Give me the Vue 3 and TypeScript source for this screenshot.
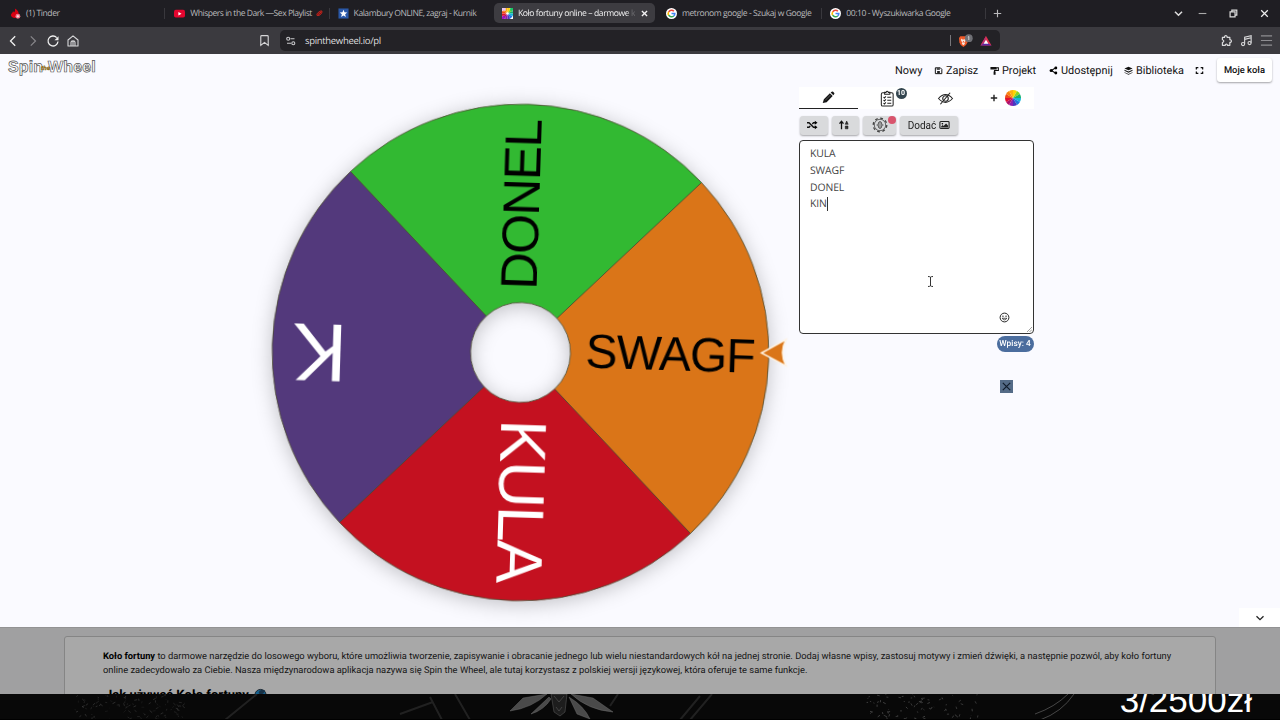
<script setup lang="ts">
interface Tab { title: string; icon: string; active?: boolean; cls: string }
interface Slice { label: string; color: string; ink: string; angle: number; size: number; end: number; len?: number }

const tabs: Tab[] = [
  { title: '(1) Tinder', icon: 'tinder', cls: 't1' },
  { title: 'Whispers in the Dark —Sex Playlist', icon: 'yt', cls: 't2' },
  { title: 'Kalambury ONLINE, zagraj - Kurnik', icon: 'kurnik', cls: 't3' },
  { title: 'Koło fortuny online – darmowe k', icon: 'wheel', active: true, cls: 't4' },
  { title: 'metronom google - Szukaj w Google', icon: 'google', cls: 't5' },
  { title: '00:10 - Wyszukiwarka Google', icon: 'google', cls: 't6' },
]

const slices: Slice[] = [
  { label: 'SWAGF', color: '#da7518', ink: '#000', angle: 0, size: 48, end: 235, len: 170 },
  { label: 'KULA', color: '#c41120', ink: '#fff', angle: 90, size: 65, end: 231, len: 164 },
  { label: 'K', color: '#53397c', ink: '#fff', angle: 180, size: 82, end: 228 },
  { label: 'DONEL', color: '#32b932', ink: '#000', angle: 270, size: 51.5, end: 234, len: 171 },
]
const R = 248.3
const r = 50
const c = Math.SQRT1_2
const wedge = `M${r * c} ${-r * c}L${R * c} ${-R * c}A${R} ${R} 0 0 1 ${R * c} ${R * c}L${r * c} ${r * c}A${r} ${r} 0 0 0 ${r * c} ${-r * c}Z`

const hues = ['#ffd400', '#8bd420', '#17b36b', '#14b7d8', '#1e78e0', '#4838c0', '#8a1fb0', '#b0106a', '#e01030', '#f04a18', '#f88410', '#fcb010']
const p = (a: number, d: number) => `${(Math.sin(a) * d).toFixed(2)} ${(-Math.cos(a) * d).toFixed(2)}`
const hueWedge = (i: number) => `M0 0L${p((i * Math.PI) / 6, 8)}A8 8 0 0 1 ${p(((i + 1) * Math.PI) / 6, 8)}Z`

const entries = ['KULA', 'SWAGF', 'DONEL', 'KIN']
const rnd = (n: number) => { const v = Math.sin(n * 12.9898) * 43758.5453; return v - Math.floor(v) }
const speckles = Array.from({ length: 190 }, (_, i) => {
  const x = (i % 5 < 3 ? 76 : 868) + rnd(i) * 110
  const y = rnd(i + 500) * 26
  return { d: `M${x.toFixed(1)} ${y.toFixed(1)}l${(rnd(i + 900) * 6 - 3).toFixed(1)} ${(rnd(i + 1300) * 5 - 2.5).toFixed(1)}`, o: 0.08 + (i % 5) * 0.05 }
})
</script>

<template>
  <div class="screen">
    <header class="tabbar">
      <div v-for="t in tabs" :key="t.title" class="tab" :class="[t.cls, { active: t.active }]">
        <svg v-if="t.icon === 'tinder'" class="fav" viewBox="0 0 12 12"><path d="M1 8C1 5.500 3 5.500 3.400 3.500C4 4 4.300 4.500 4.400 5C5.500 4 5.800 2.300 5.300.5C8.500 2 10 4.500 9.500 8C8.500 11.500 2 12 1 8Z" fill="#d80012" /><circle cx="8.600" cy="9" r="2.700" fill="#ef7187" /><path d="M8.600 7.600V10.400M7.200 9H10" stroke="#fff" stroke-width=".8" /></svg>
        <svg v-else-if="t.icon === 'yt'" class="fav" viewBox="0 0 12 12"><rect y="2" width="12" height="8.400" rx="2" fill="#e4062f" /><path d="M4.800 4.300L8.200 6.200L4.800 8.100Z" fill="#fff" /></svg>
        <svg v-else-if="t.icon === 'kurnik'" class="fav" viewBox="0 0 12 12"><rect x=".5" y=".5" width="11" height="11" fill="#2a58a8" /><path d="M6 1.900L7.100 4.700L10.100 4.900L7.800 6.800L8.600 9.800L6 8.200L3.400 9.800L4.200 6.800L1.900 4.900L4.900 4.700Z" fill="#fff" /></svg>
        <svg v-else-if="t.icon === 'wheel'" class="fav" viewBox="0 0 12 12"><rect width="12" height="12" fill="#fff" /><g transform="translate(6 6) scale(.78)"><path v-for="(h, i) in hues" :key="h" :d="hueWedge(i)" :fill="h" /></g><path d="M0 0h4v3H0z" fill="#e9c7f2" /><path d="M9 0h3v3H9z" fill="#16c768" /><path d="M0 9h3v3H0z" fill="#a015c8" /><circle cx="6" cy="6" r="1.400" fill="#fff" /></svg>
        <svg v-else class="fav" viewBox="0 0 12 12"><circle cx="6" cy="6" r="6" fill="#fff" /><g fill="none" stroke-width="1.700"><path d="M2.900 4.200A3.600 3.600 0 0 1 8.600 3.500" stroke="#ea4335" /><path d="M2.900 7.800A3.600 3.600 0 0 1 2.900 4.200" stroke="#fbbc05" /><path d="M8.400 8.700A3.600 3.600 0 0 1 2.900 7.800" stroke="#34a853" /><path d="M6 6H9.600A3.600 3.600 0 0 1 8.400 8.700" stroke="#4285f4" /></g></svg>
        <span class="title">{{ t.title }}</span>
        <svg v-if="t.icon === 'yt'" class="lips" viewBox="0 0 8 8"><path d="M1 6C.5 4 4 1 6.500 1C8 3 4 7.500 1 6ZM2 5.500L6 2" fill="#6c1013" stroke="#d12a20" stroke-width="1" /></svg>
        <svg v-if="t.active" class="close" viewBox="0 0 8 8"><path d="M1.700 1.700L6.300 6.300M6.300 1.700L1.700 6.300" stroke="#f2f2f2" stroke-width="1.200" /></svg>
      </div>
      <svg class="plus" viewBox="0 0 8 8"><path d="M4 .7V7.300M.7 4H7.300" stroke="#b9b9bc" /></svg>
      <div class="window">
        <svg viewBox="0 0 10 10"><path d="M1.800 3.400L5 6.600L8.200 3.400" fill="none" stroke="#ddd" stroke-width="1.400" /></svg>
        <svg viewBox="0 0 10 10"><path d="M1.500 5H8.500" stroke="#aaa" /></svg>
        <svg viewBox="0 0 10 10"><path d="M1.900 3.500H6.400V8H1.900ZM3.500 3.300V2H8V6.500H6.600" fill="none" stroke="#ddd" stroke-width="1.100" /></svg>
        <svg viewBox="0 0 10 10"><path d="M2 2L8 8M8 2L2 8" stroke="#eee" stroke-width="1.100" /></svg>
      </div>
    </header>

    <nav class="toolbar">
      <div class="navicons">
        <svg viewBox="0 0 14 14"><path d="M9.200 2.300L4.500 7L9.200 11.700" fill="none" stroke="#f0f0f0" stroke-width="1.300" /></svg>
        <svg viewBox="0 0 14 14"><path d="M4.800 2.300L9.500 7L4.800 11.700" fill="none" stroke="#88878b" stroke-width="1.200" /></svg>
        <svg viewBox="0 0 14 14"><path d="M12 7.500A5 5 0 1 1 10.700 3.600" fill="none" stroke="#f0f0f0" stroke-width="1.300" /><path d="M12.500 2.300V6.300H8.500Z" fill="#f0f0f0" /></svg>
        <svg viewBox="0 0 14 14"><path d="M2 6L7 1.800L12 6V12H2ZM5 12V8.200C5 6.400 9 6.400 9 8.200V12M7 7.500V12" fill="none" stroke="#d8d8da" stroke-width="1.100" stroke-linejoin="round" /></svg>
      </div>
      <svg class="bookmark" viewBox="0 0 14 14"><path d="M3 2.600Q3 1.700 4 1.700H10Q11 1.700 11 2.600V12.300L7 9L3 12.300Z" fill="none" stroke="#d6d6d8" stroke-width="1.200" /></svg>
      <div class="address">
        <svg class="tune" viewBox="0 0 12 12"><g fill="none" stroke="#c9c9cc" stroke-width="1.100"><circle cx="3.200" cy="3.800" r="1.500" /><path d="M5.500 3.800H9.500M2 8.200H6" /><circle cx="8.300" cy="8.200" r="1.500" /></g></svg>
        <span class="url">spinthewheel.io/pl</span>
        <i class="bar"></i>
        <svg class="brave" viewBox="0 0 16 14"><path d="M2 4L3.300 2.300H9.200L10.800 4L10.400 8.500Q9.500 11.500 6.400 13Q3.200 11.500 2.400 8.500Z" fill="#ef5a29" /><path d="M4 4.500L5.500 5.500H7.300L9 4.500L8.500 7L7.300 8.500L8 9.800L6.400 11.200L4.800 9.800L5.500 8.500L4.200 7Z" fill="#f5e8e2" /><path d="M5.800 7H7L6.400 9.200Z" fill="#ef5a29" /><circle cx="11.800" cy="4.200" r="3.900" fill="#6f7075" /><path d="M11.800 2.500V6M10.900 3.200L11.800 2.500" fill="none" stroke="#ddd" stroke-width=".9" /></svg>
        <svg class="bat" viewBox="0 0 12 12"><path d="M6 1L11.500 10.500H.5Z" fill="#e5304a" /><path d="M6 1L.5 10.500L6 7.500Z" fill="#b93070" /><path d="M.5 10.500H11.500L6 7Z" fill="#5a28a5" /><path d="M6 4.700L8.400 8.700H3.600Z" fill="#fff" /></svg>
      </div>
      <div class="ext">
        <svg viewBox="0 0 14 14"><path d="M3 3.500H5.300C4.800 1 8.500 1 8.100 3.500H11V6C13.300 5.600 13.300 9.300 11 8.900V12H8.300C8.500 10.300 6 10.300 6.100 12H3V9C5 8.600 5 6.300 3 6Z" transform="translate(-.4 .2)" fill="none" stroke="#dadadc" stroke-width="1.300" stroke-linejoin="round" /></svg>
        <svg viewBox="0 0 14 14"><g fill="none" stroke="#dadadc" stroke-width="1.200"><path d="M5 10.500V3.500L12 1.800V9.500M5 5.800L12 4.100" /><circle cx="3.300" cy="10.800" r="1.700" /><circle cx="10.300" cy="9.800" r="1.700" /></g></svg>
        <svg viewBox="0 0 14 14"><path d="M1 2H13M1 7H13M1 12H13" stroke="#8e8d91" stroke-width="1.200" /></svg>
      </div>
    </nav>

    <main class="page">
      <div class="head">
        <div class="logo"><span>Spin</span><em>the</em><span>Wheel</span></div>
        <ul class="menu">
          <li class="m-new">Nowy</li>
          <li class="m-save"><svg viewBox="0 0 10 10"><path d="M1.500 2H7L8.700 3.700V8.500H1.500Z" fill="none" stroke="#111" stroke-width="1.100" /><path d="M3 2.500H6.500V4.300H3ZM3.500 5.500H6.500V8H3.500Z" fill="#222" /></svg>Zapisz</li>
          <li class="m-proj"><svg viewBox="0 0 10 10"><path d="M.5 1H7.500V4H.5ZM4 6H6.200V9.700H4Z" fill="#111" /><path d="M7.500 2H9.300V5H5V7" fill="none" stroke="#111" stroke-width="1.200" /></svg>Projekt</li>
          <li class="m-share"><svg viewBox="0 0 10 10"><path d="M7.500 2L2.600 5L7.500 8" fill="none" stroke="#111" stroke-width="1.200" /><circle cx="7.600" cy="2.200" r="1.600" /><circle cx="2.400" cy="5" r="1.700" /><circle cx="7.600" cy="7.800" r="1.600" /></svg>Udostępnij</li>
          <li class="m-lib"><svg viewBox="0 0 10 10"><path d="M5 .8L9.500 2.800L5 4.800L.5 2.800ZM.5 4.300L5 6.200L9.500 4.300V5.400L5 7.400L.5 5.400ZM.5 6.900L5 8.800L9.500 6.900V7.600L5 9.800L.5 7.600Z" fill="#111" /></svg>Biblioteka</li>
          <li class="m-full"><svg viewBox="0 0 10 10"><path d="M1.500 4V1.800H3.700M6.300 1.800H8.500V4M8.500 6V8.200H6.300M3.700 8.200H1.500V6" fill="none" stroke="#111" stroke-width="1.400" /></svg></li>
          <li class="mine">Moje koła</li>
        </ul>
      </div>

      <div class="body">
        <svg class="wheel" viewBox="0 0 600 540">
          <g transform="translate(320.500 266.500)">
            <g class="disc" transform="rotate(1.800)">
              <g v-for="s in slices" :key="s.label" :transform="`rotate(${s.angle})`">
                <path :d="wedge" :fill="s.color" stroke="#4a4a30" stroke-width=".8" />
                <text :x="s.end" :y="s.size * 0.265" :font-size="s.size" :fill="s.ink" :textLength="s.len" text-anchor="end">{{ s.label }}</text>
              </g>
            </g>
            <path class="pointer" d="M241 .5L265.500 -12.800Q258.500 0 265.500 13.300Z" fill="#da7518" stroke="#fff3e2" stroke-width="1.500" />
          </g>
        </svg>

        <section class="panel">
          <div class="ptabs">
            <span class="on"><svg viewBox="0 0 14 14"><path d="M.8 13L2 9L8.500 2.500L11.500 5.500L5 12ZM9.300 1.700L10.500.7Q11.200.2 12 .9L13.200 2.200Q13.700 2.900 13 3.600L12.200 4.600Z" fill="#161616" /><path d="M3.500 10L9.500 4" stroke="#777" stroke-width=".7" /></svg></span>
            <span class="list"><svg viewBox="0 0 16 18"><g fill="none" stroke="#222" stroke-width="1.100"><rect x="2" y="3" width="12.500" height="14" rx="1.500" /><path d="M5.500 4.500V2.500H7Q8 .2 9.500 2.500H11V4.500Z" fill="#fff" /><path d="M4.300 7.500L5.300 8.400L6.800 6.700M4.300 10.700L5.300 11.600L6.800 9.900M4.300 13.900L5.300 14.800L6.800 13.100M8.300 7.700H12.500M8.300 10.900H12.500M8.300 14H12.500" /></g></svg><b class="badge">10</b></span>
            <span class="eye"><svg viewBox="0 0 18 14"><g fill="none" stroke="#222" stroke-width="1.200"><path d="M1.500 7Q9 -1.500 16.500 7Q9 15.500 1.500 7Z" /><circle cx="9" cy="7" r="3" /><path d="M14 .8L3.500 13.200" /></g></svg></span>
            <span class="add"><svg class="pl" viewBox="0 0 8 8"><path d="M4 .8V7.200M.8 4H7.200" stroke="#222" stroke-width="1.400" /></svg><svg class="hues" viewBox="-8 -8 16 16"><path v-for="(h, i) in hues" :key="h" :d="hueWedge(i)" :fill="h" /></svg></span>
          </div>
          <div class="btns">
            <button class="b1"><svg viewBox="0 0 12 10"><path d="M1 2.700H3L7.500 7.300H9.500M1 7.300H3L4.200 6M6.300 3.900L7.500 2.700H9.500" fill="none" stroke="#111" stroke-width="1.400" /><path d="M8.800.7L11.500 2.700L8.800 4.700ZM8.800 5.300L11.500 7.300L8.800 9.300Z" /></svg></button>
            <button class="b2"><svg viewBox="0 0 12 10"><path d="M3.500 9.200V2M1.500 3.700L3.500 1.300L5.500 3.700" fill="none" stroke="#111" stroke-width="1.300" /><path d="M7.200 4.300L8.700 1L10.200 4.300ZM7.300 6H10V8.800H7.300Z" fill="#333" stroke="#111" stroke-width=".5" /></svg></button>
            <button class="b3"><svg viewBox="0 0 16 16"><g fill="none" stroke="#444"><circle cx="8" cy="8" r="6.800" stroke-width="1.300" stroke-dasharray="2.800 2.540" /><circle cx="8" cy="8" r="5.700" stroke-width=".8" /><ellipse cx="8" cy="8" rx="1.900" ry="3.500" stroke-width=".9" /><path d="M8 5V11M4.500 8H6M10 8H11.500" stroke-width=".8" /></g></svg><i class="dot"></i></button>
            <button class="b4">Dodać<svg viewBox="0 0 12 10"><rect x="1" y="1.200" width="10" height="7.600" rx="1" fill="none" stroke="#222" stroke-width="1.200" /><circle cx="3.700" cy="3.600" r=".9" /><path d="M2.300 7.700V6.500L4 5L5 6L7.700 3.300L9.800 5.500V7.700Z" fill="#222" /></svg></button>
          </div>
          <div class="area">
            <p v-for="(e, i) in entries" :key="e">{{ e }}<i v-if="i === 3" class="caret"></i></p>
            <svg class="cursor" viewBox="0 0 7 13"><path d="M1 1.500Q3 1.500 3.500 2.200Q4 1.500 6 1.500M3.500 2V11M1 11.500Q3 11.500 3.500 10.800Q4 11.500 6 11.500" fill="none" stroke="#333" /></svg>
            <svg class="smile" viewBox="0 0 10 10"><g fill="none" stroke="#222"><circle cx="5" cy="5" r="4" stroke-width=".9" /><path d="M2.800 5.700Q5 8.600 7.200 5.700Z" stroke-width=".7" /></g><circle cx="3.600" cy="3.800" r=".6" /><circle cx="6.400" cy="3.800" r=".6" /></svg>
            <svg class="grip" viewBox="0 0 5 5"><path d="M0 5L5 0M2.500 5L5 2.500" stroke="#777" stroke-width=".7" /></svg>
          </div>
          <div class="count">Wpisy: 4</div>
          <div class="closebox"><svg viewBox="0 0 13 13"><path d="M2.800 2.800L10.200 10.200M10.200 2.800L2.800 10.200" stroke="#101c2c" stroke-width="1.200" /></svg></div>
        </section>
      </div>
      <div class="collapse"><svg viewBox="0 0 10 10"><path d="M1.500 3.200L5 6.700L8.500 3.200" fill="none" stroke="#222" stroke-width="1.300" /></svg></div>
    </main>

    <section class="about">
      <div class="card">
        <p class="l1"><b>Koło fortuny</b> to darmowe narzędzie do losowego wyboru, które umożliwia tworzenie, zapisywanie i obracanie jednego lub wielu niestandardowych kół na jednej stronie. Dodaj własne wpisy, zastosuj motywy i zmień dźwięki, a następnie pozwól, aby koło fortuny</p>
        <p class="l2">online zadecydowało za Ciebie. Nasza międzynarodowa aplikacja nazywa się Spin the Wheel, ale tutaj korzystasz z polskiej wersji językowej, która oferuje te same funkcje.</p>
        <h2>Jak używać Koło fortuny <svg viewBox="0 0 14 14"><circle cx="7" cy="7.500" r="6" fill="#17618e" stroke="#17202a" /><path d="M6 3Q10 1 12 3L10 6Q6 8 5 5Z" fill="#173146" /></svg></h2>
      </div>
    </section>

    <footer class="stream">
      <svg class="art" viewBox="0 0 1280 26" preserveAspectRatio="none">
        <rect width="1280" height="26" fill="#080808" />
        <g fill="none" stroke="#fff">
          <path v-for="(s, i) in speckles" :key="i" :d="s.d" :stroke-opacity="s.o" stroke-width=".8" />
          <path d="M225 26L257 0M430 3L442 26M455 0L470 26M400 20L433 8M618 0L610 12M700 2L680 26M712 0L690 26" stroke-opacity=".1" stroke-width="2" />
          <path d="M1074 0Q1062 18 1040 26M1068 0Q1055 13 1035 20" stroke-opacity=".25" />
        </g>
        <g fill="#4a4a4a" stroke="#777" stroke-width=".4">
          <path d="M547 0L523 4L510 17Q532 14 547 0ZM549 3L531 20Q544 16 551 5ZM571 0L593 4L613 18Q588 16 571 0ZM569 3L577 20L590 25Q584 12 569 3Z" />
          <path d="M551 0H567L565 18L560 22L554 18Z" fill="#1d1d1d" /><path d="M554 2L559 8L564 2M556 13L559 17L562 13" fill="none" />
        </g>
        <path d="M0 25.500H1280" stroke="#000" />
      </svg>
      <div class="amount">3/2500zł</div>
    </footer>
  </div>
</template>

<style>
body { margin: 0; overflow: hidden; }
</style>
<style scoped>
.screen { width: 1280px; height: 720px; overflow: hidden; display: flex; flex-direction: column; font-family: Roboto, "Liberation Sans", sans-serif; color: #111; text-rendering: geometricPrecision; }
svg { display: block; flex: none; }
.tabbar { height: 26px; padding-bottom: 1px; box-sizing: content-box; flex: none; background: #1f1e23; display: flex; align-items: center; font-family: "Open Sans", "Noto Sans", sans-serif; }
.tab { width: 164.300px; height: 20px; box-sizing: border-box; padding-left: 10px; display: flex; align-items: center; color: #b9b9bb; font-size: 8.600px; position: relative; }
.tab:not(.t3):not(.active)::after { content: ""; position: absolute; right: -1px; top: 5px; width: 1px; height: 11px; background: #39383d; }
.tab.active { background: #3d3c41; border-radius: 5px; width: 161px; margin-left: 1px; margin-right: 2px; padding-left: 8px; color: #efeff0; }
.tab.t3, .tab.t5, .tab.t6 { padding-left: 9px; }
.fav { width: 11px; height: 11px; margin-right: 5px; }
.title { white-space: nowrap; line-height: 14px; letter-spacing: -.44px; }
.t2 .title { letter-spacing: -.5px; }
.t3 .title { letter-spacing: -.48px; }
.active .title { width: 117px; letter-spacing: -.42px; -webkit-mask-image: linear-gradient(90deg, #000 93%, rgba(0,0,0,.25) 97%); }
.lips { width: 7px; height: 7px; margin-left: 4px; }
.close { width: 9px; height: 9px; margin-left: 5px; }
.plus { width: 9px; height: 9px; margin-left: 8px; }
.window { margin-left: auto; display: flex; gap: 0; padding-right: 10px; }
.window svg { width: 11px; height: 11px; margin-left: 20px; }
.window svg:first-child { margin: 0 -7px 0 0; }
.toolbar { height: 27px; flex: none; background: #3b3a3f; display: flex; align-items: center; }
.navicons { display: flex; gap: 6px; padding-left: 6px; width: 252px; }
.navicons svg { width: 14px; height: 14px; }
.bookmark { width: 13px; height: 13px; }
.address { margin-left: 9px; width: 720px; height: 21px; border-radius: 5px; background: #232226; display: flex; align-items: center; }
.tune { width: 12px; height: 12px; margin-left: 5px; }
.url { margin-left: 8px; color: #dededf; font: 9.500px/14px "Open Sans", "Noto Sans", sans-serif; letter-spacing: -.32px; }
.bar { width: 1px; height: 11px; background: #77767a; margin-left: auto; }
.brave { width: 16px; height: 14px; margin-left: 6px; }
.bat { width: 12px; height: 12px; margin: 0 8px 0 7px; }
.ext { display: flex; margin-left: auto; gap: 7px; padding-right: 7px; }
.ext svg { width: 13px; height: 13px; }
.page { height: 573px; flex: none; background: #fafaff; position: relative; overflow: hidden; }
.head { height: 32px; display: flex; justify-content: space-between; }
.logo { margin: 5px 0 0 8px; height: 18px; display: flex; font: bold 16px/18px "Liberation Sans", sans-serif; color: #fff; -webkit-text-stroke: .7px #555; letter-spacing: .1px; }
.logo em { position: relative; z-index: 1; width: 6px; -webkit-text-stroke: .3px #7a5c14; color: #9a7312; font: bold italic 6px/20px "Liberation Sans", sans-serif; letter-spacing: 0; margin: 0 1px 0 -2px; }
.menu { margin: 0; padding: 4px 8px 0 0; list-style: none; display: flex; align-items: center; height: 24px; font-size: 10.900px; }
.menu li { display: flex; align-items: center; white-space: nowrap; }
.menu svg { width: 9px; height: 9px; margin-right: 3px; }
.m-new { width: 39px; }
.m-save { width: 56px; }
.m-proj { width: 59px; }
.m-share { width: 75px; }
.m-lib { width: 71px; }
.m-full { width: 22px; }
.menu .mine { width: 55px; height: 24px; justify-content: center; font-size: 9.400px; font-weight: 500; background: #fff; border-radius: 3px; box-shadow: 0 1px 2px rgba(0,0,0,.35); }
.body { display: flex; height: 541px; }
.wheel { width: 600px; height: 540px; margin-left: 200px; overflow: visible; }
.wheel text { font-family: "Liberation Sans", Arial, sans-serif; }
.disc { filter: drop-shadow(0 3px 10px rgba(0,0,0,.23)); }
.panel { width: 235px; margin-left: -1px; padding-top: 1px; display: flex; flex-direction: column; position: relative; }
.ptabs { height: 22px; background: #fff; display: flex; }
.ptabs span { width: 58.500px; display: flex; align-items: center; justify-content: center; position: relative; }
.ptabs .on { border-bottom: 1px solid #222; box-sizing: border-box; }
.on svg { width: 13px; height: 13px; }
.list svg { width: 16px; height: 17px; }
.badge { position: absolute; left: 38px; top: 1px; width: 11px; height: 11px; border-radius: 50%; background: #33454f; color: #fff; font-size: 7px; line-height: 11px; text-align: center; }
.eye svg { width: 17px; height: 13px; }
.ptabs .add { justify-content: flex-end; gap: 7px; padding-right: 13px; width: 46px; margin-left: auto; }
.pl { width: 8px; height: 8px; }
.hues { width: 16px; height: 16px; }
.btns { display: flex; gap: 4px; margin: 6.500px 0 0 .5px; height: 19px; }
.btns button { border: 0; padding: 0; margin: 0; background: #d9dadc; border-radius: 3px; box-shadow: 0 1px 2px rgba(0,0,0,.35); display: flex; align-items: center; justify-content: center; position: relative; font: 400 10px Roboto, sans-serif; color: #222; height: 19px; }
.btns svg { width: 12px; height: 10px; }
.btns .b1 { width: 28.500px; padding-right: 4px; box-sizing: border-box; }
.btns .b2 { width: 27px; padding-right: 3px; box-sizing: border-box; }
.btns .b3 { width: 33px; }
.btns .b3 svg { width: 16px; height: 16px; }
.dot { position: absolute; left: 25px; top: 0; width: 8px; height: 8px; border-radius: 50%; background: #d9546e; }
.btns .b4 { width: 58px; gap: 3px; }
.btns .b4 svg { width: 11px; }
.area { margin-top: 5.500px; height: 194px; box-sizing: border-box; border: 1px solid #333; border-radius: 4px; background: #fff; padding: 5.400px 10px; position: relative; }
.area p { margin: 0; height: 16.600px; display: flex; align-items: center; font: 10.400px/16.600px "Open Sans", "Noto Sans", sans-serif; letter-spacing: -.1px; color: #444; }
.caret { width: 1px; height: 14px; background: #333; }
.cursor { position: absolute; left: 127px; top: 134px; width: 7px; height: 13px; }
.smile { position: absolute; left: 199px; top: 171px; width: 11px; height: 11px; }
.grip { position: absolute; right: 1px; bottom: 1px; width: 5px; height: 5px; }
.count { align-self: flex-end; margin: 1.500px .5px 0 0; width: 37px; height: 16px; border-radius: 8px; background: #4b6d9e; color: #fff; font-size: 8.300px; line-height: 16px; text-align: center; font-weight: 500; }
.closebox { align-self: flex-end; width: 13px; height: 13px; margin: 28.500px 21px 0 0; background: #546b87; }
.closebox svg { width: 13px; height: 13px; }
.collapse { position: absolute; right: 0; bottom: 0; width: 41px; height: 19px; background: #fff; display: flex; align-items: center; justify-content: center; }
.collapse svg { width: 10px; height: 10px; }
.about { height: 67px; flex: none; background: #a0a0a1; overflow: hidden; box-shadow: inset 0 1px #929293; }
.card { width: 1152px; box-sizing: border-box; height: 90px; margin: 9px 0 0 64px; border: 1px solid #858585; border-radius: 3px; background: #a8a8a8; padding: 13px 0 0 38px; }
.card p { margin: 0; font-size: 9.345px; line-height: 13.500px; white-space: nowrap; color: #151515; }
.card b { color: #000; }
.card h2 { margin: 11px 0 0 2px; font-size: 13px; line-height: 15px; font-weight: 700; color: #000; display: flex; gap: 5px; white-space: nowrap; }
.card h2 svg { width: 13px; height: 13px; }
.stream { height: 26px; flex: none; background: #080808; position: relative; overflow: hidden; }
.art { width: 1280px; height: 26px; }
.amount { position: absolute; right: 28px; top: -10px; color: #fff; font: 35px/34px "Liberation Sans", sans-serif; }
</style>
